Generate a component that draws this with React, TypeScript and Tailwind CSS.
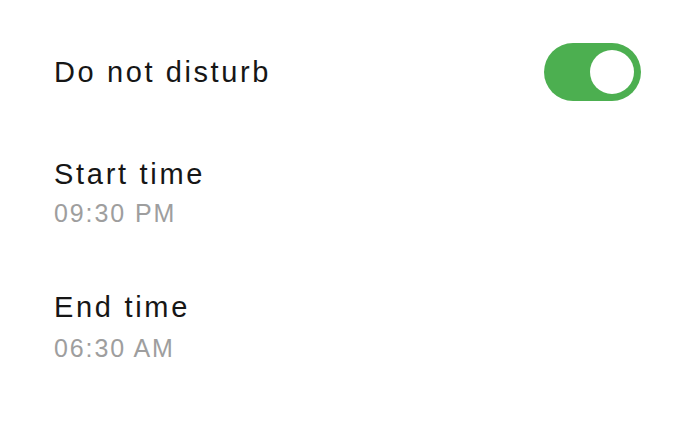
export default function App() {
  return (
    <div className="w-[700px] h-[437px] bg-white px-[54px] pt-[43px] font-['Liberation_Sans',Arial,sans-serif]">
      <div className="flex items-center justify-between h-[58px] pr-[5px]">
        <span className="text-[29px] leading-[34px] text-[#161616] tracking-[2.6px]">Do not disturb</span>
        <button
          type="button"
          className="w-[97px] h-[58px] rounded-full bg-[#4caf50] flex items-center justify-end px-[7px]"
        >
          <span className="w-[44px] h-[44px] rounded-full bg-white" />
        </button>
      </div>
      <div className="mt-[56px]">
        <div className="text-[29px] leading-[34px] text-[#161616] tracking-[2.7px]">Start time</div>
        <div className="mt-[7px] text-[25px] leading-[30px] text-[#9e9e9e] tracking-[1.9px]">09:30 PM</div>
      </div>
      <div className="mt-[62px]">
        <div className="text-[29px] leading-[34px] text-[#161616] tracking-[2.7px]">End time</div>
        <div className="mt-[9px] text-[25px] leading-[30px] text-[#9e9e9e] tracking-[1.9px]">06:30 AM</div>
      </div>
    </div>
  );
}
